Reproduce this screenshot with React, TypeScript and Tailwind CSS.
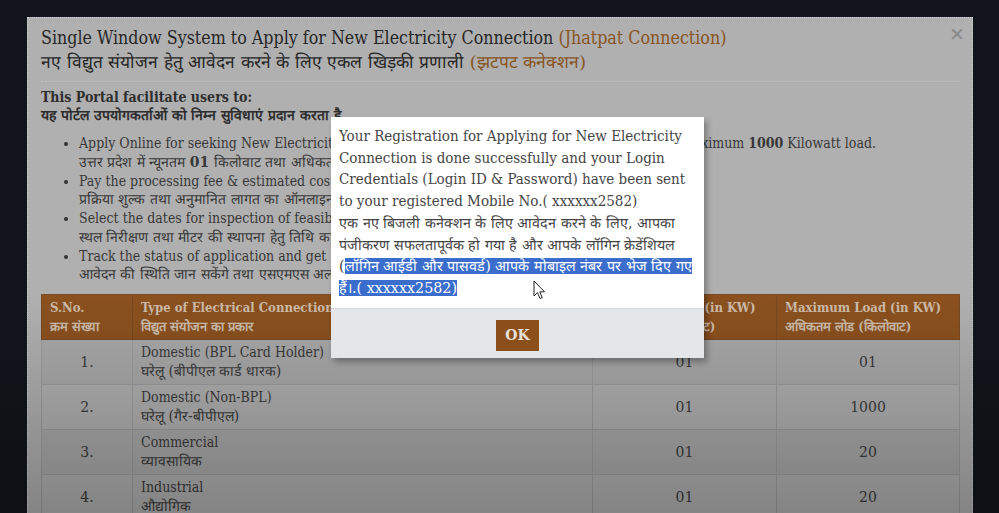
import React from 'react'

const slab = { fontFamily: '"DejaVu Serif", "Liberation Serif", serif' }

const FEATURES = [
  {
    en: '',
    hi: (
      <>
        उत्तर प्रदेश में न्यूनतम <b>01</b> किलोवाट तथा अधिकतम <b>1000</b> किलोवाट हेतु आवेदन करें।
      </>
    ),
  },
  {
    en: 'Pay the processing fee & estimated cost online through gateway.',
    hi: 'प्रक्रिया शुल्क तथा अनुमानित लागत का ऑनलाइन भुगतान कर सकेंगे।',
  },
  {
    en: 'Select the dates for inspection of feasibility and meter installation.',
    hi: 'स्थल निरीक्षण तथा मीटर की स्थापना हेतु तिथि का चयन कर सकेंगे।',
  },
  {
    en: 'Track the status of application and get SMS alerts at every stage.',
    hi: 'आवेदन की स्थिति जान सकेंगे तथा एसएमएस अलर्ट की सुविधा पा सकेंगे।',
  },
]

const ROWS = [
  { no: '1.', en: 'Domestic (BPL Card Holder)', hi: 'घरेलू (बीपीएल कार्ड धारक)', min: '01', max: '01' },
  { no: '2.', en: 'Domestic (Non-BPL)', hi: 'घरेलू (गैर-बीपीएल)', min: '01', max: '1000' },
  { no: '3.', en: 'Commercial', hi: 'व्यावसायिक', min: '01', max: '20' },
  { no: '4.', en: 'Industrial', hi: 'औद्योगिक', min: '01', max: '20' },
]

function Cursor() {
  return (
    <svg width="13" height="20" viewBox="0 0 13 20" className="absolute left-[533px] top-[280px] z-30">
      <path d="M1 1 L1 16 L4.5 12.5 L7 18.5 L9.2 17.6 L6.8 11.8 L11.5 11.8 Z" fill="#fff" stroke="#222" strokeWidth="1" strokeLinejoin="round" />
    </svg>
  )
}

export default function App() {
  return (
    <div className="relative h-[513px] w-[999px] overflow-hidden bg-[#12151b]" style={slab}>
      <div className="ml-[27px] mt-[17px] h-[520px] w-[946px] border-x border-t border-dotted border-[#cfcfcf] bg-[#b0b0b0] px-[13px]">
        <div className="relative border-b border-dotted border-[#c4c4c4] pb-[7px] pt-[8px] leading-[24px] text-[#262626]">
          <div className="whitespace-nowrap text-[17.7px] font-stretch-semi-condensed">
            Single Window System to Apply for New Electricity Connection <span className="text-[#87541f]">(Jhatpat Connection)</span>
          </div>
          <div className="whitespace-nowrap text-[17.4px]">
            नए विद्युत संयोजन हेतु आवेदन करने के लिए एकल खिड़की प्रणाली <span className="text-[#87541f]">(झटपट कनेक्शन)</span>
          </div>
          <span className="absolute right-[-6px] top-[3px] text-[19px] font-bold text-[#8a8a8a]">×</span>
        </div>

        <div className="mt-[6px] text-[14px] font-bold leading-[18px] text-[#2e2e2e]">
          <div className="font-stretch-semi-condensed">This Portal facilitate users to:</div>
          <div>यह पोर्टल उपयोगकर्ताओं को निम्न सुविधाएं प्रदान करता है</div>
        </div>

        <ul className="mt-[10px] list-disc pl-[38px] text-[14px] leading-[18.75px] text-[#383838] marker:text-[#333]">
          {FEATURES.map((f, i) => (
            <li key={i} className="whitespace-nowrap">
              <div className="font-stretch-semi-condensed">
                {i === 0 ? (
                  <>
                    Apply Online for seeking New Electricity Connection in the U.P. for minimum <b>01</b> Kilowatt and maximum <b>1000</b> Kilowatt load.
                  </>
                ) : (
                  f.en
                )}
              </div>
              <div>{f.hi}</div>
            </li>
          ))}
        </ul>

        <table className="mt-[10px] w-[919px] border-collapse text-[14px] text-[#3a3a3a]">
          <thead>
            <tr className="h-[44px] whitespace-nowrap bg-[#8b511f] text-left text-[13px] font-bold leading-[19px] text-[#cdbba8]">
              <th className="w-[91px] border border-[#7a4a22] px-[8px] py-[3px] align-top font-stretch-semi-condensed">S.No.<br />क्रम संख्या</th>
              <th className="w-[460px] border border-[#7a4a22] px-[8px] py-[3px] align-top font-stretch-semi-condensed">Type of Electrical Connection<br />विद्युत संयोजन का प्रकार</th>
              <th className="w-[184px] border border-[#7a4a22] px-[8px] py-[3px] align-top font-stretch-semi-condensed">Minimum Load (in KW)<br />न्यूनतम लोड (किलोवाट)</th>
              <th className="border border-[#7a4a22] px-[8px] py-[3px] align-top font-stretch-semi-condensed">Maximum Load (in KW)<br />अधिकतम लोड (किलोवाट)</th>
            </tr>
          </thead>
          <tbody>
            {ROWS.map((r, i) => (
              <tr key={r.no} className={`h-[44px] leading-[19px] ${i % 2 === 0 ? 'bg-[#a9a9a9]' : 'bg-[#b0b0b0]'}`}>
                <td className="border border-[#9c9c9c] text-center">{r.no}</td>
                <td className="border border-[#9c9c9c] px-[8px] py-[3px]">
                  <div className="font-stretch-semi-condensed">{r.en}</div>
                  <div>{r.hi}</div>
                </td>
                <td className="border border-[#9c9c9c] text-center">{r.min}</td>
                <td className="border border-[#9c9c9c] text-center">{r.max}</td>
              </tr>
            ))}
          </tbody>
        </table>
      </div>

      <div className="pointer-events-none absolute inset-x-0 bottom-0 h-[220px] bg-gradient-to-b from-transparent to-black/25" />

      <div className="absolute left-[331px] top-[117px] z-20 w-[373px] bg-white shadow-[3px_4px_6px_rgba(0,0,0,0.3)]">
        <div className="pb-[8px] pl-[8px] pr-[5px] pt-[9px] text-[15px] leading-[21.7px] text-[#454545]">
          <p className="font-stretch-semi-condensed">
            Your Registration for Applying for New Electricity Connection is done successfully and your Login Credentials (Login ID &amp; Password) have been sent to your registered Mobile No.( xxxxxx2582)
          </p>
          <p className="text-[14.3px]">
            एक नए बिजली कनेक्शन के लिए आवेदन करने के लिए, आपका पंजीकरण सफलतापूर्वक हो गया है और आपके लॉगिन क्रेडेंशियल (
            <span className="bg-[#3b6dcd] text-white">लॉगिन आईडी और पासवर्ड) आपके मोबाइल नंबर पर भेज दिए गए हैं।.( xxxxxx2582)</span>
          </p>
        </div>
        <div className="flex h-[50px] justify-center border-t border-dotted border-[#c8c8c8] bg-[#e5e6e8] pt-[11px]">
          <button className="h-[31px] w-[43px] bg-[#8b4f1c] text-[14px] font-bold text-[#e8e0d8]">OK</button>
        </div>
      </div>

      <Cursor />
    </div>
  )
}
